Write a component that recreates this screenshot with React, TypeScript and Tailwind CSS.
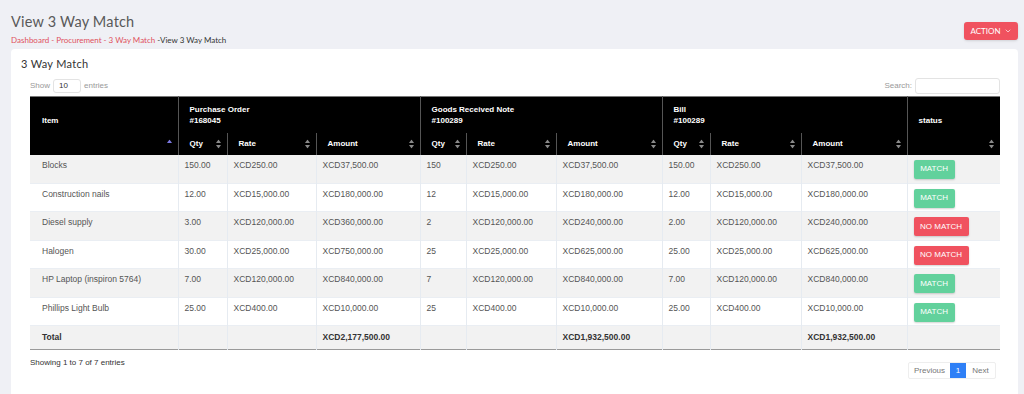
import { ChevronDown } from 'lucide-react'

interface Row {
  item: string
  po: [string, string, string]
  grn: [string, string, string]
  bill: [string, string, string]
  match: boolean
}

const rows: Row[] = [
  { item: 'Blocks', po: ['150.00', 'XCD250.00', 'XCD37,500.00'], grn: ['150', 'XCD250.00', 'XCD37,500.00'], bill: ['150.00', 'XCD250.00', 'XCD37,500.00'], match: true },
  { item: 'Construction nails', po: ['12.00', 'XCD15,000.00', 'XCD180,000.00'], grn: ['12', 'XCD15,000.00', 'XCD180,000.00'], bill: ['12.00', 'XCD15,000.00', 'XCD180,000.00'], match: true },
  { item: 'Diesel supply', po: ['3.00', 'XCD120,000.00', 'XCD360,000.00'], grn: ['2', 'XCD120,000.00', 'XCD240,000.00'], bill: ['2.00', 'XCD120,000.00', 'XCD240,000.00'], match: false },
  { item: 'Halogen', po: ['30.00', 'XCD25,000.00', 'XCD750,000.00'], grn: ['25', 'XCD25,000.00', 'XCD625,000.00'], bill: ['25.00', 'XCD25,000.00', 'XCD625,000.00'], match: false },
  { item: 'HP Laptop (inspiron 5764)', po: ['7.00', 'XCD120,000.00', 'XCD840,000.00'], grn: ['7', 'XCD120,000.00', 'XCD840,000.00'], bill: ['7.00', 'XCD120,000.00', 'XCD840,000.00'], match: true },
  { item: 'Phillips Light Bulb', po: ['25.00', 'XCD400.00', 'XCD10,000.00'], grn: ['25', 'XCD400.00', 'XCD10,000.00'], bill: ['25.00', 'XCD400.00', 'XCD10,000.00'], match: true },
]

const widths = [148, 49, 89, 104, 46, 90, 106, 48, 91, 106, 93]

function SortBoth() {
  return (
    <svg width="5" height="9" viewBox="0 0 5 9" className="absolute right-[6px] top-1/2 -translate-y-1/2">
      <path d="M2.5 0 L5 3.6 L0 3.6 Z" fill="#8a8a8a" />
      <path d="M2.5 9 L5 5.4 L0 5.4 Z" fill="#8a8a8a" />
    </svg>
  )
}

function SortAsc() {
  return (
    <svg width="5" height="9" viewBox="0 0 5 9" className="absolute right-[6px] top-1/2 -translate-y-1/2">
      <path d="M2.5 0 L5 3.6 L0 3.6 Z" fill="#7b78e0" />
    </svg>
  )
}

const subHead = ['Qty', 'Rate', 'Amount']

export default function App() {
  return (
    <div className="min-h-[394px] bg-[#eff0f5] font-['Liberation_Sans',Arial,sans-serif]">
      {/* Page header */}
      <div className="flex justify-between pl-[11px] pr-[6px] pt-[12px]">
        <div>
          <h1 className="text-[14.5px] leading-[20px] text-[#595959] font-['Lato',sans-serif] tracking-[0.2px]">
            View 3 Way Match
          </h1>
          <p className="mt-[3px] text-[8px] leading-[10px] font-['Lato',sans-serif]">
            <span className="text-[#e0505d]">Dashboard - Procurement - 3 Way Match</span>
            <span className="text-[#333]"> -View 3 Way Match</span>
          </p>
        </div>
        <button className="mt-[10px] self-start h-[18px] w-[54px] rounded-[3px] bg-[#f0525f] text-white text-[8px] flex items-center justify-center gap-[3px] shadow-sm font-['Lato',sans-serif]">
          ACTION
          <ChevronDown size={8} strokeWidth={2} />
        </button>
      </div>

      {/* Card */}
      <div className="ml-[11px] mr-[6px] mt-[4px] bg-white rounded-t-[4px] pl-[10px] pr-[18px] pt-[8px] pb-[20px]">
        <h2 className="text-[11px] leading-[13px] text-[#333] font-['Lato',sans-serif] tracking-[0.3px]">3 Way Match</h2>

        <div className="ml-[9px] mt-[8px] flex items-center justify-between">
          <div className="flex items-center text-[8px] text-[#999]">
            <span>Show</span>
            <div className="ml-[3px] mr-[3px] h-[14px] w-[28px] rounded-[3px] border border-[#e3e3e3] text-[#333] pl-[5px] leading-[12px]">10</div>
            <span>entries</span>
          </div>
          <div className="flex items-center text-[8px] text-[#999]">
            <span>Search:</span>
            <div className="ml-[3px] h-[16px] w-[85px] rounded-[3px] border border-[#e3e3e3]" />
          </div>
        </div>

        <table className="ml-[9px] mt-[2px] table-fixed border-collapse w-[970px] text-[8.5px]">
          <colgroup>
            {widths.map((w, i) => (
              <col key={i} style={{ width: w }} />
            ))}
          </colgroup>
          <thead className="bg-black text-white font-bold text-[8px]">
            <tr className="h-[36px] border-t border-[#777]">
              <th className="align-bottom text-left pl-3 pb-[7px] border-r border-[#555] leading-[11px]">Item</th>
              <th colSpan={3} className="align-bottom text-left pl-[11px] pb-[7px] border-r border-[#555] leading-[11px]">
                Purchase Order<br />#168045
              </th>
              <th colSpan={3} className="align-bottom text-left pl-[11px] pb-[7px] border-r border-[#555] leading-[11px]">
                Goods Received Note<br />#100289
              </th>
              <th colSpan={3} className="align-bottom text-left pl-[11px] pb-[7px] border-r border-[#555] leading-[11px]">
                Bill<br />#100289
              </th>
              <th className="align-bottom text-left pl-[11px] pb-[7px] leading-[11px]">status</th>
            </tr>
            <tr className="h-[22px]">
              <th className="relative border-r border-[#555]">
                <SortAsc />
              </th>
              {[0, 1, 2].map((g) =>
                subHead.map((s) => (
                  <th key={`${g}-${s}`} className="relative text-left pl-[11px] border-r border-[#555]">
                    {s}
                    <SortBoth />
                  </th>
                ))
              )}
              <th className="relative">
                <SortBoth />
              </th>
            </tr>
          </thead>
          <tbody className="text-[#555]">
            {rows.map((r, i) => (
              <tr key={r.item} className={`h-[28.5px] border-b border-[#eaeef3] ${i % 2 === 0 ? 'bg-[#f2f2f2]' : 'bg-white'}`}>
                <td className="align-top pt-[4px] pl-3 leading-[12px] border-r border-[#e6ebf1]">{r.item}</td>
                {[...r.po, ...r.grn, ...r.bill].map((v, j) => (
                  <td key={j} className="align-top pt-[4px] pl-[6px] leading-[12px] border-r border-[#e6ebf1] whitespace-nowrap">
                    {v}
                  </td>
                ))}
                <td className="align-top pt-[5px] pl-[6px]">
                  {r.match ? (
                    <span className="inline-flex h-[19px] w-[41px] items-center justify-center rounded-[2px] bg-[#62d19c] text-white text-[8px] shadow-[0_1px_2px_rgba(0,0,0,0.18)]">
                      MATCH
                    </span>
                  ) : (
                    <span className="inline-flex h-[19px] w-[55px] items-center justify-center rounded-[2px] bg-[#f0525f] text-white text-[8px] shadow-[0_1px_2px_rgba(0,0,0,0.18)]">
                      NO MATCH
                    </span>
                  )}
                </td>
              </tr>
            ))}
            <tr className="h-[24px] bg-[#f2f2f2] font-bold text-[#333] border-b border-[#9a9a9a]">
              <td className="pl-3 border-r border-[#e6ebf1]">Total</td>
              <td className="border-r border-[#e6ebf1]" />
              <td className="border-r border-[#e6ebf1]" />
              <td className="pl-[6px] border-r border-[#e6ebf1]">XCD2,177,500.00</td>
              <td className="border-r border-[#e6ebf1]" />
              <td className="border-r border-[#e6ebf1]" />
              <td className="pl-[6px] border-r border-[#e6ebf1]">XCD1,932,500.00</td>
              <td className="border-r border-[#e6ebf1]" />
              <td className="border-r border-[#e6ebf1]" />
              <td className="pl-[6px] border-r border-[#e6ebf1]">XCD1,932,500.00</td>
              <td />
            </tr>
          </tbody>
        </table>

        <div className="ml-[9px] flex justify-between items-start">
          <p className="mt-[8px] text-[8px] leading-[10px] text-[#333]">Showing 1 to 7 of 7 entries</p>
          <div className="mt-[12px] mr-[4px] flex h-[17px] rounded-[2px] border border-[#eeeeee] text-[8px] text-[#777]">
            <span className="w-[41px] flex items-center justify-center">Previous</span>
            <span className="w-[16px] flex items-center justify-center bg-[#2f80f6] text-white">1</span>
            <span className="w-[29px] flex items-center justify-center">Next</span>
          </div>
        </div>
      </div>
    </div>
  )
}
